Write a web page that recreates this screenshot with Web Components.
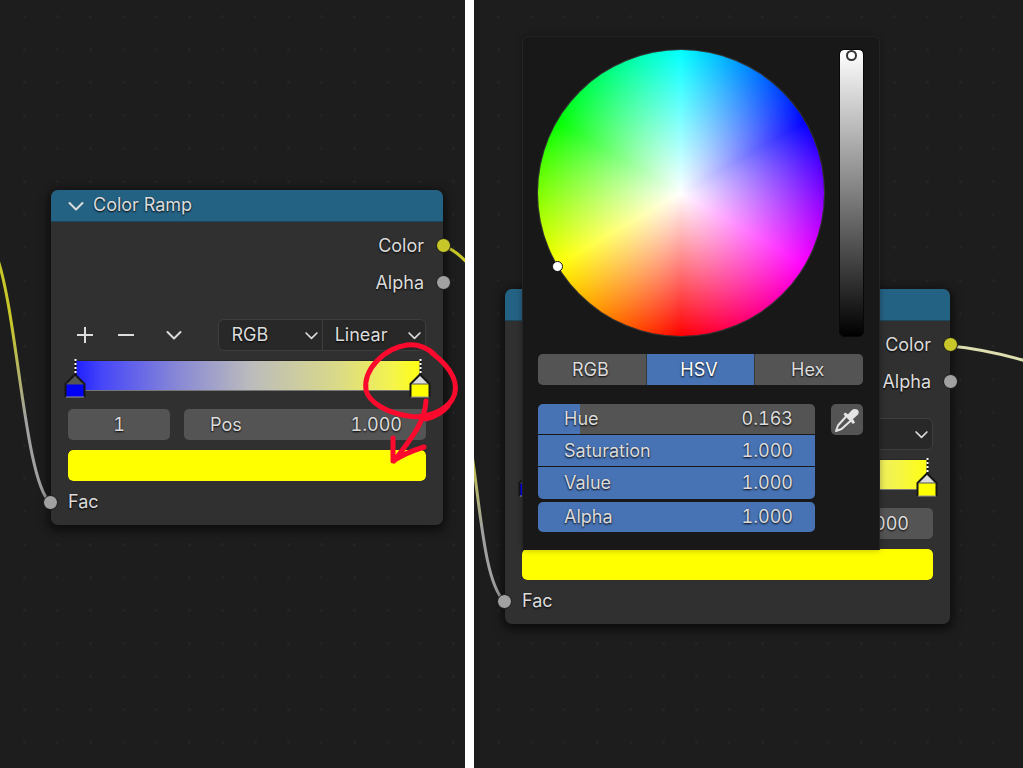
<!DOCTYPE html>
<html lang="en">
<head>
<meta charset="utf-8">
<meta name="viewport" content="width=device-width, initial-scale=1">
<title>Color Ramp node</title>
<style>
body{margin:0;background:#fff;color:#dcdcdc;font:18px/24px Inter,"Liberation Sans",sans-serif;font-variant-numeric:tabular-nums}
</style>
</head>
<body>
<ramp-page></ramp-page>

<script>
const define = (name, html, setup) => {
  const template = document.createElement('template');
  template.innerHTML = html;
  customElements.define(name, class extends HTMLElement {
    connectedCallback() {
      if (this.shadowRoot) return;
      const root = this.attachShadow({ mode: 'open' });
      root.append(template.content.cloneNode(true));
      if (setup) setup(this, root);
    }
  });
};

define('ui-chevron', `
<style>:host{display:block;width:18px;height:18px;pointer-events:none}svg{display:block;width:100%;height:100%}</style>
<svg viewBox="0 0 18 18" fill="none" stroke="#dcdcdc" stroke-width="2" stroke-linecap="round" stroke-linejoin="round" aria-hidden="true"><path d="M2.500 6 9 12.500 15.500 6"/></svg>`);

define('node-socket', `
<style>:host{display:block;flex:none;width:13px;height:13px;border-radius:50%;border:1px solid #161616;background:var(--socket,#a1a1a1)}</style>`);

/* Canvas: dotted grid that holds freely placed nodes */
define('node-canvas', `
<style>:host{display:block;position:relative;overflow:hidden;min-width:0;
background:radial-gradient(circle at center,#242424 1px,transparent 2px) 8px 0/33px 33px,#1d1d1d}</style>
<slot></slot>`);

define('ui-select', `
<style>
:host{display:flex;position:relative;flex:1;min-width:0}
select{appearance:none;width:100%;border:0;margin:0;padding:0 20px 0 12px;background:transparent;color:inherit;font:inherit;text-shadow:0 1px 2px #000}
ui-chevron{position:absolute;right:3px;top:8px;width:15px;height:15px}
</style>
<select></select><ui-chevron></ui-chevron>`, (host, root) => {
  const select = root.querySelector('select');
  select.setAttribute('aria-label', host.getAttribute('label'));
  select.add(new Option(host.getAttribute('value')));
});

define('ramp-stop', `
<style>:host{position:absolute;z-index:1;top:-1px;width:22px;height:40px}svg{display:block}</style>
<svg width="22" height="40" viewBox="0 0 22 40" aria-hidden="true">
<path d="M11.500 0v16" stroke="#111" stroke-width="2"/>
<path d="M11.500 0v16" stroke="#fff" stroke-width="2" stroke-dasharray="2 2"/>
<path class="tip" d="M2 25 11 16 20 25z"/>
<path class="box" d="M2 25h18v13H2z"/>
<path d="M1.500 38V25L11 15.500 20.500 25V38" fill="none" stroke="#161616" stroke-width="2"/>
<path d="M2.500 25h17" stroke="#555"/>
<path d="M2 38h18" stroke="#999"/>
</svg>`, (host, root) => {
  root.querySelector('.tip').setAttribute('fill', host.getAttribute('tip'));
  root.querySelector('.box').setAttribute('fill', host.getAttribute('color'));
});

define('color-ramp-node', `
<style>
:host{display:block;position:absolute;isolation:isolate;box-sizing:border-box;background:#303030;border-radius:7px;box-shadow:0 3px 10px 3px rgba(0,0,0,.55);text-shadow:0 1px 2px #000}
header{display:flex;align-items:center;gap:8px;height:31px;padding:0 16px;background:#246283;border-radius:7px 7px 0 0;border-bottom:1px solid #1b475e}
header span{padding-bottom:2px}
.outputs{padding:5px 0 18px}
.row{display:flex;align-items:center;height:37px}
.out{justify-content:flex-end;gap:12px;margin-right:-8px}
.in{gap:10px;height:30px;margin:6px 0 8px -8px}
.body{padding:0 17px}
.tools{display:flex;justify-content:space-between;height:32px}
.ops{display:flex;align-items:center;margin-left:1px}
.ops button{display:grid;place-items:center;width:32px;height:32px;margin-right:9px;padding:0;border:0;background:none;color:inherit}
.ops button:last-child{margin-left:7px;margin-right:0}
.modes{display:flex;width:58%;border:1px solid #3e3e3e;border-radius:6px;background:#282828;box-sizing:border-box}
.modes ui-select+ui-select{border-left:1px solid #3e3e3e}
.ramp{position:relative;height:31px;margin:9px 5px 18px 8px;background:linear-gradient(90deg,#2020ff 0,#4848f8 8%,#8484d8 28%,#bcbcbc 51%,#dada88 76%,#f4f44c 92%,#ffff10 100%)}
.ramp::after{content:"";position:absolute;inset:0;border-top:1px solid #262626;border-bottom:1px solid #777}
.a{left:-12px}.b{right:-10px}
.fields{display:flex;gap:14px;height:31px}
.index,.pos{box-sizing:border-box;border-radius:5px;background:#545454}
input{min-width:0;border:0;margin:0;font:inherit;color:inherit;background:none;text-shadow:inherit}
.index{width:102px;text-align:center}
.pos{display:flex;align-items:center;flex:1;padding:0 24px 0 26px}
.pos input{flex:1;width:0;padding:0;text-align:right}
.swatch{appearance:none;display:block;width:100%;height:31px;margin-top:10px;padding:0;border-radius:5px;overflow:hidden}
.swatch::-webkit-color-swatch-wrapper{padding:0}
.swatch::-webkit-color-swatch{border:0;border-radius:5px}
</style>
<header><ui-chevron></ui-chevron><span>Color Ramp</span></header>
<div class="outputs">
 <div class="row out"><span>Color</span><node-socket style="--socket:#c7c729"></node-socket></div>
 <div class="row out"><span>Alpha</span><node-socket></node-socket></div>
</div>
<div class="body">
 <div class="tools">
  <div class="ops">
   <button aria-label="Add stop"><svg width="16" height="16" stroke="#dcdcdc" stroke-width="2"><path d="M0 8h16M8 0v16"/></svg></button>
   <button aria-label="Remove stop"><svg width="16" height="16" stroke="#dcdcdc" stroke-width="2"><path d="M0 8h16"/></svg></button>
   <button aria-label="More tools"><ui-chevron></ui-chevron></button>
  </div>
  <div class="modes"><ui-select label="Color mode" value="RGB"></ui-select><ui-select label="Interpolation" value="Linear"></ui-select></div>
 </div>
 <div class="ramp"><ramp-stop class="a" tip="#555" color="#0000f5"></ramp-stop><ramp-stop class="b" tip="#dcdcdc" color="#ffff00"></ramp-stop></div>
 <div class="fields">
  <input class="index" aria-label="Active stop" value="1">
  <label class="pos">Pos<input value="1.000"></label>
 </div>
 <input class="swatch" type="color" aria-label="Stop color" value="#ffff00">
</div>
<div class="row in"><node-socket></node-socket><span>Fac</span></div>`);

define('number-slider', `
<style>
:host{display:block;background:linear-gradient(90deg,#4772b3 var(--fill,100%),#545454 0)}
label{display:flex;align-items:center;height:100%;padding:0 22px 0 26px}
input{flex:1;width:0;min-width:0;padding:0;border:0;background:none;font:inherit;color:inherit;text-align:right;text-shadow:inherit}
</style>
<label><slot></slot><input></label>`, (host, root) => {
  root.querySelector('input').value = host.getAttribute('value');
  root.querySelector('input').setAttribute('aria-label', host.textContent);
});

define('color-picker', `
<style>
:host{display:flex;flex-direction:column;position:absolute;box-sizing:border-box;padding:13px 16px 17px 15px;background:#181818;border:1px solid #242424;border-bottom:0;border-radius:6px 6px 0 0;box-shadow:0 0 6px rgba(0,0,0,.3);text-shadow:0 1px 2px #000}
.top{display:flex;justify-content:space-between}
.wheel{position:relative;width:286px;height:286px;border-radius:50%;box-shadow:0 0 0 1px #363636;background:radial-gradient(closest-side,#fff,rgba(255,255,255,0)),conic-gradient(from 180deg,#f00,#ff0,#0f0,#0ff,#00f,#f0f,#f00)}
.dot{position:absolute;left:14px;top:211px;width:9px;height:9px;border-radius:50%;border:1px solid #111;background:#fff}
.value{appearance:none;writing-mode:vertical-lr;direction:rtl;width:23px;height:286px;margin:0;border-radius:4px;outline:1px solid #080808;background:linear-gradient(#fff,#000)}
.value::-webkit-slider-thumb{appearance:none;box-sizing:border-box;width:11px;height:11px;border-radius:50%;border:2px solid #333;background:#fff}
.tabs{display:flex;gap:1px;height:31px;margin-top:18px;border-radius:5px;overflow:hidden;background:#383838}
.tabs button{flex:1;padding:0 3px 0 0;border:0;background:#545454;color:inherit;font:inherit;text-shadow:inherit}
.tabs .on{background:#4772b3;color:#fff}
.channels{display:flex;gap:16px;align-items:flex-start;margin-top:19px}
.list{display:grid;grid-template-rows:30px 31px 32px 32px;gap:1px;flex:1}
number-slider:first-child{border-radius:5px 5px 0 0}
number-slider:nth-child(3){border-radius:0 0 5px 5px}
number-slider:nth-child(4){border-radius:5px;margin-top:2px}
.pick{display:grid;place-items:center;width:32px;height:31px;padding:0;border:0;border-radius:5px;background:#545454}
</style>
<div class="top"><div class="wheel"><span class="dot"></span></div><input class="value" type="range" min="0" max="1" step="0.01" value="1" aria-label="Brightness"></div>
<div class="tabs"><button>RGB</button><button class="on">HSV</button><button>Hex</button></div>
<div class="channels">
 <div class="list">
  <number-slider style="--fill:15%" value="0.163">Hue</number-slider>
  <number-slider value="1.000">Saturation</number-slider>
  <number-slider value="1.000">Value</number-slider>
  <number-slider value="1.000">Alpha</number-slider>
 </div>
 <button class="pick" aria-label="Pick color"><svg width="26" height="26" viewBox="0 0 26 26"><path d="M12.500 9 4 18.500 2 24l5.500-2L17 13.500" fill="none" stroke="#e4e4e4" stroke-width="2" stroke-linejoin="round"/><path d="m11 5.500 3 1.800 4-4.300c2-2 6-1 6.500 1 .6 2-.3 3.500-1.500 4.500l-4 3.500 2 3.500-2 1.500L9.500 7.500z" fill="#e4e4e4"/></svg></button>
</div>`);

define('ramp-page', `
<style>
:host{display:grid;grid-template-columns:465fr 549fr;gap:9px;min-height:100vh}
svg{position:absolute;left:0;top:0;overflow:visible;pointer-events:none}
.wire{fill:none;stroke-width:3}
.first{left:51px;top:190px;width:392px}
.second{left:31px;top:289px;width:445px}
color-picker{left:48px;top:36px;width:358px;height:514px}
</style>
<node-canvas>
 <svg width="1" height="1" aria-hidden="true"><defs><linearGradient id="in" gradientUnits="userSpaceOnUse" x1="0" y1="262" x2="0" y2="502"><stop offset=".25" stop-color="#c7c729"/><stop offset=".66" stop-color="#a1a1a1"/></linearGradient></defs>
 <path class="wire" stroke="url(#in)" d="M-3 257C17 312 25 482 50 502"/><path class="wire" stroke="#c7c729" d="M443 246Q456 250 468 264"/></svg>
 <color-ramp-node class="first"></color-ramp-node>
 <svg width="1" height="1" aria-hidden="true"><g fill="none" stroke="#fb0a2d" stroke-width="5" stroke-linecap="round" stroke-linejoin="round">
 <path d="M434 354C426 347 416 344 407 345 385 348 363 369 366 390 369 403 388 413 408 416 424 419 444 412 452 400 461 385 452 368 432 353"/>
 <path d="M426 401C425 423 410 440 394 461M393 438V461Q405 453 424 447M426 419Q439 416 448 406"/></g></svg>
</node-canvas>
<node-canvas>
 <svg width="1" height="1" aria-hidden="true"><defs><linearGradient id="mid" gradientUnits="userSpaceOnUse" x1="0" y1="465" x2="0" y2="530"><stop stop-color="#bcbc50"/><stop offset="1" stop-color="#a1a1a1"/></linearGradient></defs>
 <path class="wire" stroke="url(#mid)" d="M-2 455C7 515 11 582 30 601"/><path class="wire" stroke="#dedeb0" d="M476 346Q510 349 552 361"/></svg>
 <color-ramp-node class="second"></color-ramp-node>
 <color-picker></color-picker>
</node-canvas>`);
</script>
</body>
</html>
